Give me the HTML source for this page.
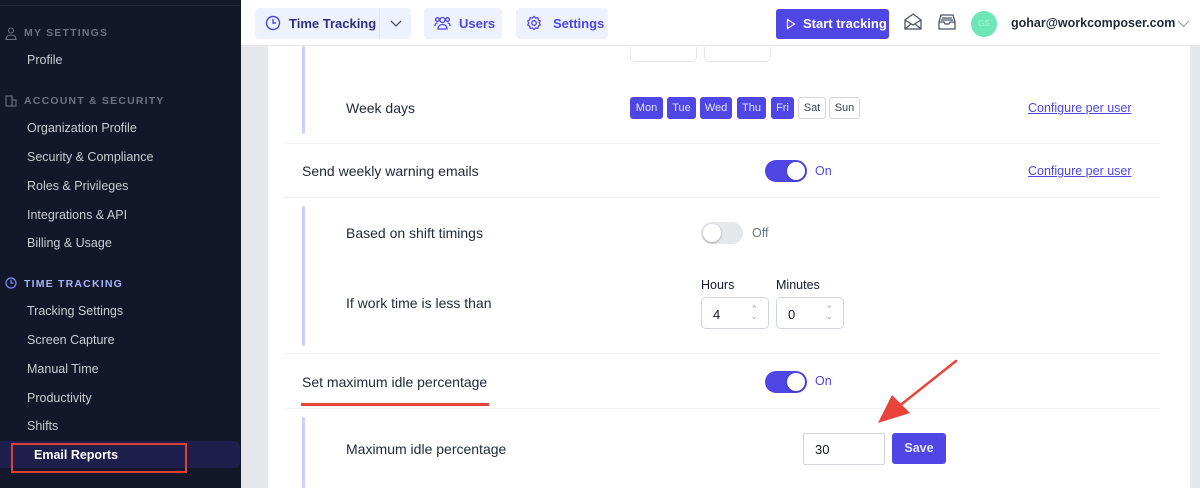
<!DOCTYPE html>
<html><head><meta charset="utf-8"><style>
*{box-sizing:border-box;margin:0;padding:0}
body{width:1200px;height:488px;overflow:hidden;font-family:"Liberation Sans",Arial,sans-serif;background:#fff;position:relative;color:#1f2937}
.a{position:absolute}
#sb{left:0;top:0;width:241px;height:488px;background:#121829}
.sh{position:absolute;left:24px;font-size:10.5px;font-weight:bold;letter-spacing:1.2px;color:#6b7280}
.si{position:absolute;left:27px;font-size:12.5px;color:#c9ccd3}
.t{font-size:14px;color:#1f2937;position:absolute}
.day{position:absolute;top:97px;height:22px;font-size:11px;line-height:20px;text-align:center;border-radius:3px}
.on{background:#4f46e5;color:#e0e7ff;border:1px solid #4f46e5}
.off{background:#fff;color:#374151;border:1px solid #d1d5db}
.tg{position:absolute;width:42px;height:22px;border-radius:11px}
.tg i{position:absolute;top:2px;width:18px;height:18px;border-radius:50%;background:#fff;box-shadow:0 1px 2px rgba(0,0,0,.3)}
.lnk{position:absolute;left:1028px;font-size:12.5px;color:#4f46e5;text-decoration:underline}
.sep{position:absolute;left:284px;width:876px;height:1px;background:#f0f1f3}
.vl{position:absolute;left:302px;width:3px;background:#c7d2fe;border-radius:2px}
.inp{position:absolute;border:1px solid #d1d5db;border-radius:5px;background:#fff;font-size:13px;color:#111827}
.nb{position:absolute;top:8px;height:31px;background:#eef2ff;border-radius:4px;font-size:13px;font-weight:bold;color:#4f46e5;line-height:31px}
</style></head><body>
<div id="sb" class="a">
<div class="a" style="left:0;top:5px;width:241px;height:1px;background:#1f2638"></div>
<svg class="a" style="left:5px;top:27px" width="12" height="13" viewBox="0 0 12 13" fill="none" stroke="#6b7280" stroke-width="1.1"><circle cx="6" cy="3.5" r="2.5"/><path d="M1 12.5c0-3 2.2-4.5 5-4.5s5 1.5 5 4.5z"/></svg>
<div class="sh" style="top:27px">MY SETTINGS</div>
<div class="si" style="top:53px">Profile</div>
<svg class="a" style="left:5px;top:95px" width="12" height="12" viewBox="0 0 12 12" fill="none" stroke="#6b7280" stroke-width="1.1"><rect x="1" y="1" width="6" height="10"/><rect x="7" y="5" width="4" height="6"/></svg>
<div class="sh" style="top:95px">ACCOUNT &amp; SECURITY</div>
<div class="si" style="top:121px">Organization Profile</div>
<div class="si" style="top:150px">Security &amp; Compliance</div>
<div class="si" style="top:179px">Roles &amp; Privileges</div>
<div class="si" style="top:208px">Integrations &amp; API</div>
<div class="si" style="top:236px">Billing &amp; Usage</div>
<svg class="a" style="left:5px;top:277px" width="12" height="12" viewBox="0 0 12 12" fill="none" stroke="#818cf8" stroke-width="1.2"><circle cx="6" cy="6" r="5"/><path d="M6 3v3h2.5"/></svg>
<div class="sh" style="top:278px;color:#a5b4fc">TIME TRACKING</div>
<div class="si" style="top:304px">Tracking Settings</div>
<div class="si" style="top:333px">Screen Capture</div>
<div class="si" style="top:362px">Manual Time</div>
<div class="si" style="top:391px">Productivity</div>
<div class="si" style="top:419px">Shifts</div>
<div class="a" style="left:0;top:441px;width:240px;height:27px;background:#1e1f4b;border-radius:0 6px 6px 0"></div>
<div class="a" style="left:11px;top:443px;width:176px;height:30px;border:2px solid #e0403a"></div>
<div class="si" style="left:34px;top:448px;color:#fff;font-weight:bold">Email Reports</div>
</div>
<div class="a" style="left:241px;top:46px;width:27px;height:442px;background:#e5e7eb"></div>
<div class="a" style="left:1190px;top:46px;width:10px;height:442px;background:#e5e7eb"></div>
<div class="a" style="left:241px;top:0;width:959px;height:46px;background:#fff;border-bottom:1px solid #e5e7eb"></div>
<div class="nb" style="left:255px;width:156px;padding-left:34px;color:#312e81">Time Tracking</div>
<div class="a" style="left:379px;top:8px;width:1px;height:31px;background:#dde3fb"></div>
<svg class="a" style="left:265px;top:15px" width="16" height="16" viewBox="0 0 16 16" fill="none" stroke="#4f46e5" stroke-width="1.4"><circle cx="8" cy="8" r="6.5"/><path d="M8 4v4h3"/></svg>
<svg class="a" style="left:389px;top:19px" width="14" height="10" viewBox="0 0 14 10" fill="none" stroke="#4b5563" stroke-width="1.3"><path d="M2 2l5 5 5-5"/></svg>
<div class="nb" style="left:424px;width:78px;padding-left:35px">Users</div>
<svg class="a" style="left:434px;top:15px" width="17" height="16" viewBox="0 0 17 16" fill="none" stroke="#4f46e5" stroke-width="1.3"><circle cx="8.5" cy="5" r="2.5"/><circle cx="3.5" cy="4.5" r="1.8"/><circle cx="13.5" cy="4.5" r="1.8"/><path d="M4 14c0-3 2-4.5 4.5-4.5S13 11 13 14zM1 11c0-2 1-3 2.5-3M16 11c0-2-1-3-2.5-3"/></svg>
<div class="nb" style="left:516px;width:92px;padding-left:37px">Settings</div>
<svg class="a" style="left:526px;top:15px" width="16" height="16" viewBox="0 0 16 16" fill="none" stroke="#4f46e5" stroke-width="1.3"><circle cx="8" cy="8" r="2.3"/><path d="M8 1.5l1.6 1.5 2.2-.3.5 2.1 1.9 1.2-.9 2 .9 2-1.9 1.2-.5 2.1-2.2-.3L8 14.5l-1.6-1.5-2.2.3-.5-2.1-1.9-1.2.9-2-.9-2 1.9-1.2.5-2.1 2.2.3z"/></svg>
<div class="a" style="left:776px;top:9px;width:113px;height:30px;background:#4f46e5;border-radius:3px;color:#fff;font-size:13px;font-weight:bold;line-height:30px;padding-left:27px">Start tracking</div>
<svg class="a" style="left:786px;top:18px" width="10" height="12" viewBox="0 0 10 12" fill="none" stroke="#fff" stroke-width="1.2"><path d="M1.5 1.5v9l7-4.5z"/></svg>
<svg class="a" style="left:903px;top:12px" width="20" height="20" viewBox="0 0 20 20" fill="none" stroke="#4b5563" stroke-width="1.3"><path d="M2 8l8-6 8 6v9H2zM2 8l8 5 8-5M2 17l6-5M18 17l-6-5"/></svg>
<svg class="a" style="left:937px;top:13px" width="20" height="18" viewBox="0 0 20 18" fill="none" stroke="#4b5563" stroke-width="1.3"><path d="M2 9l2-7h12l2 7v7H2zM2 9h5l1 2h4l1-2h5M5 5h10M4 7h12"/></svg>
<div class="a" style="left:971px;top:11px;width:26px;height:26px;border-radius:50%;background:#6ee7b7;color:#a7f3d0;font-size:8px;line-height:26px;text-align:center">GS</div>
<div class="a" style="left:1011px;top:16px;font-size:12.5px;font-weight:bold;color:#1f2937">gohar@workcomposer.com</div>
<svg class="a" style="left:1177px;top:20px" width="13" height="8" viewBox="0 0 13 8" fill="none" stroke="#9ca3af" stroke-width="1.2"><path d="M1 1l5.5 5.5L12 1"/></svg>
<div class="vl" style="top:46px;height:88px"></div>
<div class="a" style="left:630px;top:47px;width:67px;height:15px;border:1px solid #e5e7eb;border-top:none;border-radius:0 0 5px 5px"></div>
<div class="a" style="left:704px;top:47px;width:67px;height:15px;border:1px solid #e5e7eb;border-top:none;border-radius:0 0 5px 5px"></div>
<div class="t" style="left:346px;top:100px">Week days</div>
<div class="day on" style="left:630px;width:33px">Mon</div>
<div class="day on" style="left:667px;width:29px">Tue</div>
<div class="day on" style="left:700px;width:32px">Wed</div>
<div class="day on" style="left:737px;width:29px">Thu</div>
<div class="day on" style="left:771px;width:23px">Fri</div>
<div class="day off" style="left:798px;width:28px">Sat</div>
<div class="day off" style="left:829px;width:31px">Sun</div>
<div class="lnk" style="top:101px">Configure per user</div>
<div class="sep" style="top:143px"></div>
<div class="t" style="left:302px;top:163px">Send weekly warning emails</div>
<div class="tg" style="left:765px;top:160px;background:#4f46e5"><i style="left:22px"></i></div>
<div class="a" style="left:815px;top:164px;font-size:12.5px;color:#4f46e5">On</div>
<div class="lnk" style="top:164px">Configure per user</div>
<div class="sep" style="top:197px"></div>
<div class="vl" style="top:206px;height:140px"></div>
<div class="t" style="left:346px;top:225px">Based on shift timings</div>
<div class="tg" style="left:701px;top:222px;background:#e5e7eb"><i style="left:2px"></i></div>
<div class="a" style="left:752px;top:226px;font-size:12.5px;color:#6b7280">Off</div>
<div class="t" style="left:346px;top:295px">If work time is less than</div>
<div class="a" style="left:701px;top:278px;font-size:12.5px;color:#111827">Hours</div>
<div class="a" style="left:776px;top:278px;font-size:12.5px;color:#111827">Minutes</div>
<div class="inp" style="left:701px;top:297px;width:68px;height:32px;padding:9px 0 0 11px">4<span style="position:absolute;right:10px;top:8px;font-size:9px;color:#9ca3af;line-height:7px">⌃<br>⌄</span></div>
<div class="inp" style="left:776px;top:297px;width:68px;height:32px;padding:9px 0 0 11px">0<span style="position:absolute;right:10px;top:8px;font-size:9px;color:#9ca3af;line-height:7px">⌃<br>⌄</span></div>
<div class="sep" style="top:353px"></div>
<div class="t" style="left:302px;top:374px">Set maximum idle percentage</div>
<div class="a" style="left:301px;top:403px;width:188px;height:3px;background:#e5453b"></div>
<div class="tg" style="left:765px;top:371px;background:#4f46e5"><i style="left:22px"></i></div>
<div class="a" style="left:815px;top:374px;font-size:12.5px;color:#4f46e5">On</div>
<div class="sep" style="top:408px"></div>
<div class="vl" style="top:417px;height:71px"></div>
<div class="t" style="left:346px;top:441px">Maximum idle percentage</div>
<div class="inp" style="left:803px;top:433px;width:82px;height:32px;padding:8px 0 0 11px;border-radius:2px">30</div>
<div class="a" style="left:892px;top:433px;width:54px;height:31px;background:#4f46e5;border-radius:3px;color:#e0e7ff;font-size:12.5px;font-weight:bold;line-height:31px;text-align:center">Save</div>
<svg class="a" style="left:870px;top:355px" width="95" height="75" viewBox="0 0 95 75"><path d="M86 6L28 52" stroke="#e8443a" stroke-width="2.5" stroke-linecap="round"/><path d="M8 68L22 40L40 58z" fill="#e8443a"/></svg>
</body></html>
